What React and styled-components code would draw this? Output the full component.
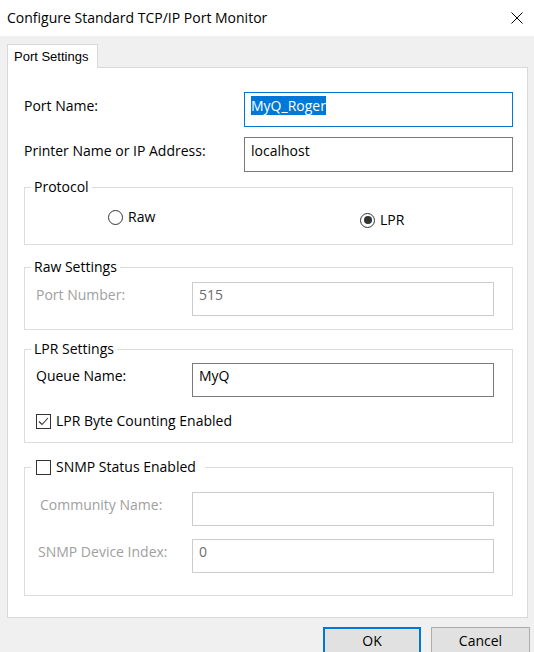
import React from 'react';
import styled, { createGlobalStyle } from 'styled-components';

const GlobalStyle = createGlobalStyle`
  html, body {
    margin: 0;
    padding: 0;
  }
  body {
    background: #f0f0f0;
    font-family: "Open Sans", "Noto Sans", sans-serif;
    font-size: 14px;
    color: #000;
    overflow: hidden;
  }
  * {
    box-sizing: border-box;
  }
`;

const Window = styled.div`
  width: 534px;
  height: 652px;
  display: flex;
  flex-direction: column;
  background: #f0f0f0;
  overflow: hidden;
`;

const TitleBar = styled.div`
  height: 36px;
  flex: none;
  background: #fff;
  display: flex;
  align-items: center;
  justify-content: space-between;
  padding: 0 11px 0 7px;
`;

const Title = styled.div`
  font-size: 14px;
  line-height: 20px;
`;

const Content = styled.div`
  padding: 8px 0 0 7px;
  display: flex;
  flex-direction: column;
`;

const TabStrip = styled.div`
  display: flex;
  position: relative;
  z-index: 1;
`;

const Tab = styled.div`
  width: 91px;
  height: 24px;
  margin-bottom: -1px;
  padding: 4px 0 0 6px;
  background: #fff;
  border: 1px solid #d9d9d9;
  border-bottom: none;
  font-family: "Liberation Sans", Arial, sans-serif;
  font-size: 13px;
  line-height: 16px;
`;

const Panel = styled.div`
  width: 521px;
  background: #fff;
  border: 1px solid #d9d9d9;
  padding: 24px 14px 21px 16px;
`;

const TopRow = styled.div`
  display: grid;
  grid-template-columns: 220px 1fr;
  margin-top: ${(p) => p.$mt || 0}px;
`;

const FieldRow = styled.div`
  display: grid;
  grid-template-columns: 156px 302px;
  margin-top: ${(p) => p.$mt || 0}px;
`;

const Label = styled.div`
  padding-top: ${(p) => (p.$top ? 4 : 3)}px;
  padding-left: ${(p) => p.$indent || 0}px;
  line-height: 19px;
  color: ${(p) => (p.$disabled ? '#a0a0a0' : '#000')};
  white-space: nowrap;
`;

const TextBox = styled.div`
  height: ${(p) => (p.$top ? 35 : 34)}px;
  padding: ${(p) => (p.$top ? 3 : 2)}px 6px 0;
  line-height: 19px;
  background: #fff;
  border: 1px solid
    ${(p) => (p.$focused ? '#0078d7' : p.$disabled ? '#cccccc' : '#7a7a7a')};
  color: ${(p) => (p.$disabled ? '#6d6d6d' : '#000')};
  white-space: nowrap;
`;

const Selection = styled.span`
  background: #0078d7;
  color: #fff;
`;

const Group = styled.fieldset`
  margin: ${(p) => p.$mt}px 0 0;
  padding: 0 17px ${(p) => p.$pb}px 11px;
  border: 1px solid #dcdcdc;
  min-width: 0;
`;

const Legend = styled.legend`
  margin-left: -5px;
  padding: 0 ${(p) => (p.$wide ? 9 : 3)}px 0 ${(p) => (p.$wide ? 5 : 3)}px;
  line-height: 20px;
  display: flex;
  align-items: center;
  gap: 5px;
`;

const RadioRow = styled.div`
  display: grid;
  grid-template-columns: 252px auto;
  align-items: start;
  padding-left: 72px;
  margin-top: 10px;
`;

const Option = styled.label`
  display: flex;
  align-items: center;
  gap: 5px;
  line-height: 20px;
  margin-top: ${(p) => p.$offset || 0}px;
`;

const RadioCircle = styled.span`
  width: 15px;
  height: 15px;
  flex: none;
  border: 1px solid #333;
  border-radius: 50%;
  display: flex;
  align-items: center;
  justify-content: center;
  &::after {
    content: '';
    width: 8px;
    height: 8px;
    border-radius: 50%;
    background: #333;
    display: ${(p) => (p.$checked ? 'block' : 'none')};
  }
`;

const CheckBox = styled.span`
  width: 15px;
  height: 15px;
  flex: none;
  border: 1px solid #333;
  background: #fff;
  display: flex;
  align-items: center;
  justify-content: center;
`;

const CheckRow = styled.div`
  margin-top: 14px;
`;

const ButtonRow = styled.div`
  display: flex;
  justify-content: flex-end;
  gap: 10px;
  padding-right: 4px;
  margin-top: 9px;
`;

const Button = styled.button`
  width: ${(p) => p.$w}px;
  height: 27px;
  padding: 0;
  background: #e1e1e1;
  border: ${(p) => (p.$primary ? '2px solid #0078d7' : '1px solid #adadad')};
  font-family: inherit;
  font-size: 14px;
  line-height: 19px;
  color: #000;
`;

const Close = () => (
  <svg width="12" height="12" viewBox="0 0 12 12">
    <path d="M0.5 0.5 L11.5 11.5 M11.5 0.5 L0.5 11.5" stroke="#000" strokeWidth="1" fill="none" />
  </svg>
);

const Check = ({ checked }) => (
  <CheckBox>
    {checked && (
      <svg width="11" height="11" viewBox="0 0 11 11">
        <path d="M1 5.5 L4 8.5 L10 2" stroke="#333" strokeWidth="1.1" fill="none" />
      </svg>
    )}
  </CheckBox>
);

const Radio = ({ checked, label, offset }) => (
  <Option $offset={offset}>
    <RadioCircle $checked={checked} />
    {label}
  </Option>
);

export default function App() {
  return (
    <>
      <GlobalStyle />
      <Window>
        <TitleBar>
          <Title>Configure Standard TCP/IP Port Monitor</Title>
          <Close />
        </TitleBar>
        <Content>
          <TabStrip>
            <Tab>Port Settings</Tab>
          </TabStrip>
          <Panel>
            <TopRow>
              <Label $top>Port Name:</Label>
              <TextBox $top $focused>
                <Selection>MyQ_Roger</Selection>
              </TextBox>
            </TopRow>
            <TopRow $mt={10}>
              <Label $top>Printer Name or IP Address:</Label>
              <TextBox $top>localhost</TextBox>
            </TopRow>

            <Group $mt={5} $pb={14}>
              <Legend>Protocol</Legend>
              <RadioRow>
                <Radio label="Raw" />
                <Radio label="LPR" checked offset={3} />
              </RadioRow>
            </Group>

            <Group $mt={12} $pb={13}>
              <Legend>Raw Settings</Legend>
              <FieldRow $mt={5}>
                <Label $disabled>Port Number:</Label>
                <TextBox $disabled>515</TextBox>
              </FieldRow>
            </Group>

            <Group $mt={9} $pb={11}>
              <Legend>LPR Settings</Legend>
              <FieldRow $mt={4}>
                <Label>Queue Name:</Label>
                <TextBox>MyQ</TextBox>
              </FieldRow>
              <CheckRow>
                <Option>
                  <Check checked />
                  LPR Byte Counting Enabled
                </Option>
              </CheckRow>
            </Group>

            <Group $mt={14} $pb={22}>
              <Legend $wide>
                <Check />
                SNMP Status Enabled
              </Legend>
              <FieldRow $mt={15}>
                <Label $disabled $indent={4}>Community Name:</Label>
                <TextBox $disabled />
              </FieldRow>
              <FieldRow $mt={13}>
                <Label $disabled $indent={2}>SNMP Device Index:</Label>
                <TextBox $disabled>0</TextBox>
              </FieldRow>
            </Group>
          </Panel>
          <ButtonRow>
            <Button $w={98} $primary>OK</Button>
            <Button $w={99}>Cancel</Button>
          </ButtonRow>
        </Content>
      </Window>
    </>
  );
}
